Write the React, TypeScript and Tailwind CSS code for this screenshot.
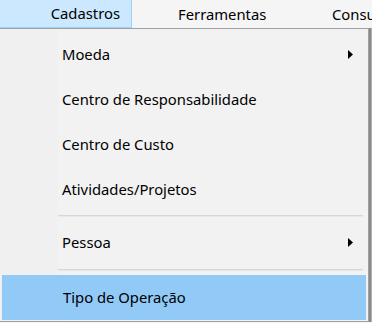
import React from "react";

const font = { fontFamily: '"Segoe UI", "Noto Sans", "Open Sans", sans-serif' };

function Arrow() {
  return (
    <svg width="5" height="9" viewBox="0 0 5 9" className="block">
      <path d="M0 0 L5 4.5 L0 9 Z" fill="#000" />
    </svg>
  );
}

function Item({ label, sub, active }: { label: string; sub?: boolean; active?: boolean }) {
  return (
    <div className="h-[45px] flex items-stretch px-[2px]">
      <div
        className={
          "flex-1 flex items-center pl-[60px] pr-[13px] " +
          (active ? "bg-[#91c9f7] border border-[#91c9f7]" : "")
        }
      >
        <span className="flex-1 text-[14.8px] text-black">{label}</span>
        {sub && <Arrow />}
      </div>
    </div>
  );
}

function Sep({ h }: { h: number }) {
  return (
    <div className={"flex items-center pl-[58px] pr-[5px] " + (h === 8 ? "h-[8px]" : "h-[10px]")}>
      <div className="h-[2px] w-full bg-[#d7d7d7] border-b border-[#e8e8e8]" />
    </div>
  );
}

export default function App() {
  return (
    <div className="w-[372px] h-[323px] overflow-hidden bg-[#f5f5f5] relative" style={font}>
      <div className="h-[28px] flex items-stretch bg-[#f5f5f5] text-[14.8px] text-black">
        <div className="w-[132px] shrink-0 flex items-center justify-end pr-[11px] bg-[#cce8ff] border-r border-b border-[#99d1ff]">
          Cadastros
        </div>
        <div className="w-[200px] shrink-0 flex items-center pl-[46px]">Ferramentas</div>
        <div className="shrink-0 flex items-center">Consultas</div>
      </div>
      <div className="flex">
        <div className="w-[369px] shrink-0 h-[294px] bg-[#f2f2f2] border-t border-r border-b border-[#a0a0a0] relative">
          <div className="absolute left-0 top-0 bottom-0 w-[58px] bg-[#f0f0f0]" />
          <div className="relative pt-[3px]">
            <Item label="Moeda" sub />
            <Item label="Centro de Responsabilidade" />
            <Item label="Centro de Custo" />
            <Item label="Atividades/Projetos" />
            <Sep h={8} />
            <Item label="Pessoa" sub />
            <Sep h={10} />
            <Item label="Tipo de Operação" active />
          </div>
        </div>
        <div className="w-[3px] shrink-0 h-[294px] flex">
          <div className="w-[2px] bg-[#8a8a8a]" />
          <div className="w-[1px] bg-[#b0b0b0]" />
        </div>
      </div>
    </div>
  );
}
